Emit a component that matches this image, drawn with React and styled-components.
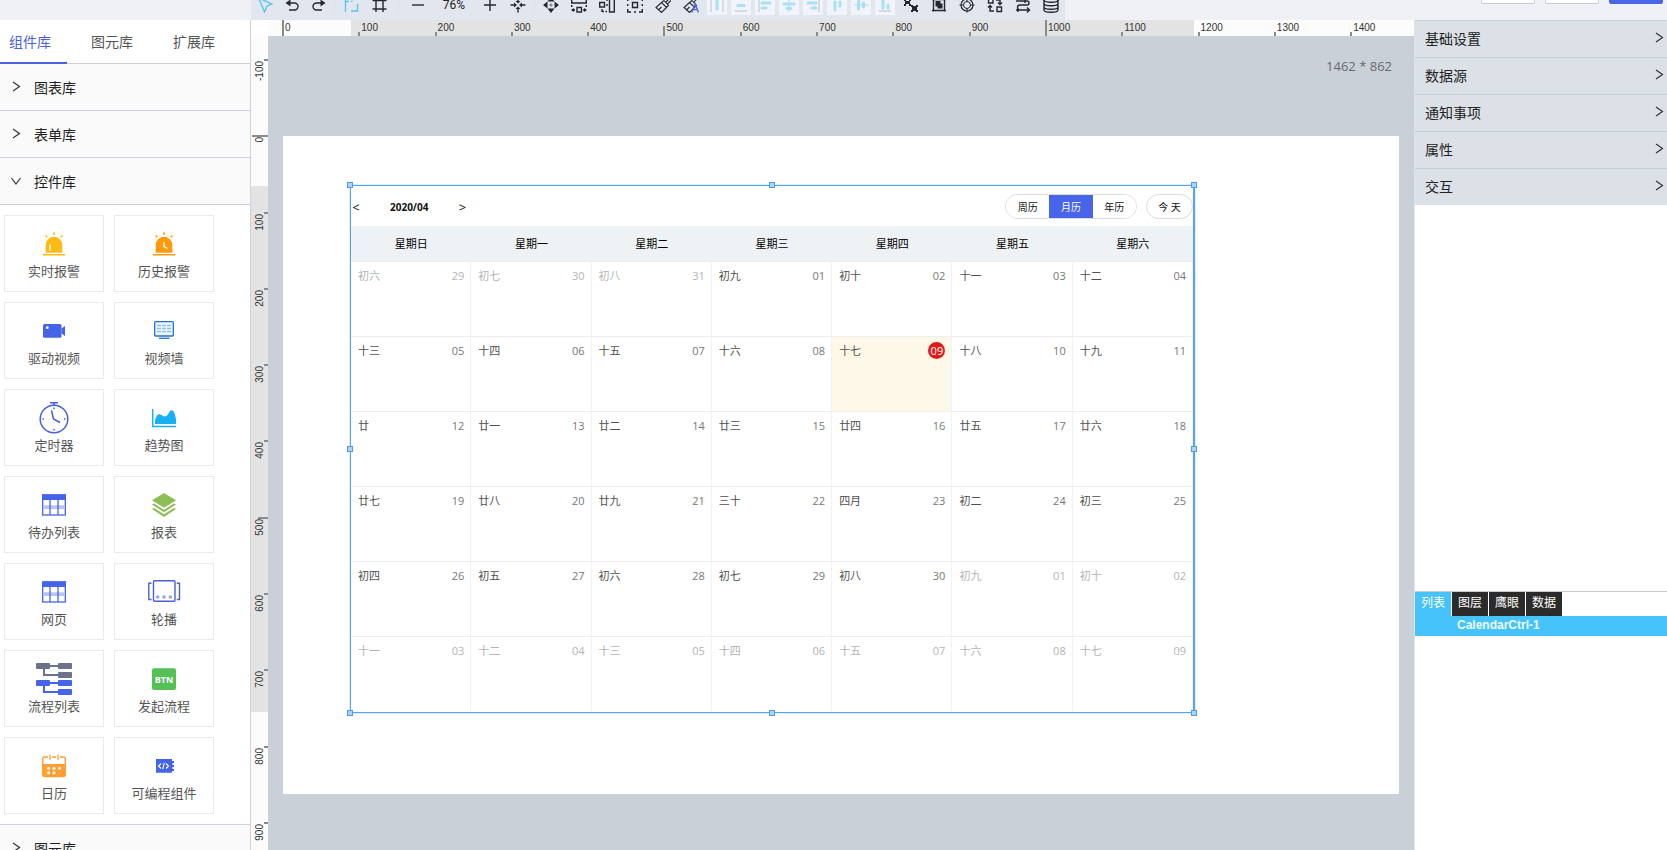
import React from "react";
import styled, { createGlobalStyle, css } from "styled-components";

const GlobalStyle = createGlobalStyle`
  *, *::before, *::after { box-sizing: border-box; }
  html, body, #root { height: 100%; }
  body {
    margin: 0;
    font-family: "Open Sans", "Noto Sans CJK SC", sans-serif;
    font-size: 14px;
    color: #222;
    background: #fff;
  }
  button {
    font: inherit;
    color: inherit;
    padding: 0;
    border: 0;
    background: none;
    cursor: pointer;
  }
  svg { display: block; flex: none; }
`;

/* ---------- shell ---------- */

const Shell = styled.div`
  --unit: calc(100px * 0.763);
  height: 100vh;
  display: flex;
  flex-direction: column;
  overflow: hidden;
`;

const TopBar = styled.header`
  flex: 0 0 20px;
  display: flex;
  align-items: flex-end;
  justify-content: space-between;
  padding-left: 251px;
  background: #eff1f6;
  overflow: hidden;
`;

const Workspace = styled.div`
  flex: 1;
  min-height: 0;
  display: grid;
  grid-template-columns: 251px minmax(0, 1fr) 253px;
`;

/* ---------- toolbar ---------- */

const Toolbar = styled.div`
  display: flex;
  align-items: center;
  height: 30px;
  background: #e2e7ef;
`;

const ToolGroup = styled.div`
  display: flex;
  align-items: center;
  gap: ${(p) => p.$gap || 0}px;
  padding: 0 ${(p) => p.$pad || 0}px;
`;

const Tool = styled.button`
  width: ${(p) => p.$width || 28}px;
  height: 30px;
  display: flex;
  align-items: center;
  justify-content: center;
  color: ${(p) => (p.$active ? "#5cc4ee" : "#23272e")};
`;

const AlignTool = styled.button`
  width: 20px;
  height: 20px;
  display: flex;
  align-items: center;
  justify-content: center;
  background: #f1f4fa;
`;

const Separator = styled.span`
  width: 1px;
  height: 20px;
  margin: 0 ${(p) => p.$space}px;
  background: #dbe1ea;
`;

const ZoomValue = styled.output`
  width: 44px;
  text-align: center;
  font: 12px/20px Roboto, sans-serif;
`;

const Actions = styled.div`
  display: flex;
  gap: 10px;
  padding: 0 4px 16px 0;
`;

const Action = styled.button`
  width: 54px;
  height: 30px;
  border: 1px solid ${(p) => (p.$primary ? "#4a67e8" : "#c9ccd3")};
  border-radius: 2px;
  background: ${(p) => (p.$primary ? "#4a67e8" : "#fff")};
`;

/* ---------- library panel ---------- */

const Library = styled.aside`
  display: flex;
  flex-direction: column;
  min-height: 0;
  border-right: 1px solid #cfd2da;
  background: #fff;
  overflow: hidden;
`;

const LibraryTabs = styled.div`
  flex: none;
  height: 44px;
  display: flex;
  gap: 15px;
  border-bottom: 1px solid #cdd0d9;
`;

const LibraryTab = styled.button`
  height: 44px;
  padding: 2px 16px 0 9px;
  text-align: left;
  line-height: 20px;
  color: ${(p) => (p.$active ? "#4a63d8" : "#555")};
  border-bottom: 2px solid ${(p) => (p.$active ? "#4a63d8" : "transparent")};
`;

const SectionHead = styled.button`
  flex: none;
  display: flex;
  align-items: center;
  gap: 12px;
  width: 100%;
  height: 47px;
  padding: 0 0 1px 10px;
  border-bottom: 1px solid #cdd0d9;
  background: #fafafa;
  color: #222;
`;

const CardGrid = styled.div`
  flex: none;
  display: grid;
  grid-template-columns: repeat(2, 100px);
  gap: 10px;
  padding: 10px 4px;
  border-bottom: 1px solid #cdd0d9;
`;

const Card = styled.button`
  height: 77px;
  display: flex;
  flex-direction: column;
  align-items: center;
  gap: 1px;
  padding-top: 12px;
  border: 1px solid #eaeaea;
  background: #fff;
  font-size: 13px;
  line-height: 20px;
  color: #555;
`;

/* ---------- stage ---------- */

const Stage = styled.main`
  display: grid;
  grid-template-columns: 17px minmax(0, 1fr);
  grid-template-rows: 16px minmax(0, 1fr);
  min-height: 0;
  background: #cad0d7;
`;

const Corner = styled.div`
  background: #fff;
`;

const rulerText = css`
  font-family: "Liberation Sans", sans-serif;
  font-size: 10px;
  line-height: 14px;
  color: #333;
`;

const TopRuler = styled.div`
  ${rulerText}
  display: flex;
  overflow: hidden;
  padding-left: 14px;
  background: linear-gradient(
    to right,
    #fcfcfc 83px,
    #e3e3e3 83px,
    #e3e3e3 calc(100% - 220px),
    #fcfcfc calc(100% - 220px)
  );
`;

const TopMark = styled.span`
  flex: 0 0 var(--unit);
  padding: 1px 0 0 3px;
  display: flex;
  background: linear-gradient(#8a8a8a, #8a8a8a) left bottom / 2px ${(p) => p.$tick}px no-repeat;
`;

const SideRuler = styled.div`
  ${rulerText}
  display: flex;
  flex-direction: column;
  overflow: hidden;
  padding-top: 23px;
  background: linear-gradient(
    to bottom,
    #fcfcfc 150px,
    #e3e3e3 150px,
    #e3e3e3 676px,
    #fcfcfc 676px
  );
`;

const SideMark = styled.span`
  flex: 0 0 var(--unit);
  padding-top: 2px;
  display: flex;
  justify-content: center;
  align-items: flex-start;
  background: linear-gradient(#8a8a8a, #8a8a8a) right top / ${(p) => p.$tick}px 2px no-repeat;
`;

const SideLabel = styled.span`
  writing-mode: vertical-rl;
  transform: rotate(180deg);
`;

const Board = styled.div`
  min-width: 0;
  overflow: hidden;
  padding: 0 15px;
`;

const BoardSize = styled.div`
  height: 100px;
  padding: 20px 7px 0 0;
  text-align: right;
  font-size: 13px;
  line-height: 20px;
  color: #666b70;
`;

const Paper = styled.div`
  padding: 49px 204px 81px 67px;
  background: #fff;
`;

const Selection = styled.div`
  position: relative;
  padding-bottom: 1px;
  border: 1px solid #5aa4ea;
  border-right-width: 2px;
  box-shadow: 0 0 0 1px #dcefff;
`;

const HandleLayer = styled.div`
  position: absolute;
  inset: -1px;
  pointer-events: none;
`;

const Handle = styled.i`
  position: absolute;
  left: ${(p) => p.$x}%;
  top: ${(p) => p.$y}%;
  width: 6px;
  height: 6px;
  margin: -3px 0 0 -3px;
  border: 1px solid #4f9ae6;
  background: #a9d4fb;
`;

/* ---------- calendar ---------- */

const CalendarHead = styled.div`
  height: 40px;
  display: flex;
  align-items: center;
  justify-content: space-between;
  font-size: 10px;
  line-height: 16px;
  color: #111;
`;

const MonthNav = styled.div`
  display: flex;
  align-items: center;
  gap: 30px;
  padding: 1px 0 0 1px;
`;

const NavArrow = styled.button`
  font-size: 13px;
  line-height: 16px;
  width: 8px;
`;

const ModeBar = styled.div`
  display: flex;
  gap: 9px;
  padding-top: 1px;
`;

const ModeGroup = styled.div`
  display: flex;
  height: 25px;
  width: 132px;
  border: 1px solid #dcdcdc;
  border-radius: 13px;
  overflow: hidden;
`;

const Mode = styled.button`
  flex: 1;
  color: ${(p) => (p.$active ? "#fff" : "#111")};
  background: ${(p) => (p.$active ? "#4864e8" : "#fff")};
`;

const Today = styled.button`
  width: 47px;
  height: 25px;
  border: 1px solid #dcdcdc;
  border-radius: 13px;
`;

const CalendarTable = styled.table`
  width: 100%;
  table-layout: fixed;
  border-collapse: separate;
  border-spacing: 0;
  font-size: 11px;
  line-height: 18px;
`;

const Weekday = styled.th`
  height: 35px;
  padding: 0;
  background: #eef2f5;
  color: #000;
  font-weight: 400;
`;

const Day = styled.td`
  height: 75px;
  padding: 5px 6px 0 7px;
  vertical-align: top;
  border-right: 1px solid #f2f2f2;
  border-top: 1px solid #eee;
  background: ${(p) => (p.$today ? "#fdf8e8" : "#fff")};
  color: ${(p) => (p.$muted ? "#b4b4b4" : "#505050")};
`;

const DayLine = styled.div`
  display: flex;
  justify-content: space-between;
`;

const DayNumber = styled.span`
  color: ${(p) => (p.$muted ? "#b4b4b4" : "#777")};
`;

const TodayBadge = styled.span`
  width: 17px;
  height: 17px;
  border-radius: 50%;
  line-height: 17px;
  text-align: center;
  color: #fff;
  background: #e01a1a;
`;

/* ---------- inspector ---------- */

const Inspector = styled.aside`
  display: flex;
  flex-direction: column;
  min-height: 0;
  border-left: 1px solid #dfe4e9;
  background: #fff;
`;

const SettingList = styled.div`
  flex: 1;
  min-height: 0;
  overflow: hidden;
`;

const Setting = styled.button`
  display: flex;
  align-items: center;
  justify-content: space-between;
  width: 100%;
  height: 37px;
  padding: 0 2px 2px 10px;
  border-top: 1px solid #c8cfd6;
  background: #dce1e8;
  color: #222;
`;

const Outline = styled.div`
  flex: 0 0 259px;
  border-top: 1px solid #ccc;
`;

const OutlineTabs = styled.div`
  display: flex;
  gap: 1px;
`;

const OutlineTab = styled.button`
  width: 36px;
  height: 24px;
  padding-bottom: 2px;
  font-size: 12px;
  line-height: 20px;
  color: #fff;
  background: ${(p) => (p.$active ? "#46c3fa" : "#2b2b2b")};
`;

const OutlineItem = styled.button`
  display: block;
  width: 100%;
  height: 20px;
  padding: 0 0 2px 42px;
  text-align: left;
  font: bold 12px/18px "Liberation Sans", sans-serif;
  color: #eefaff;
  background: #46c3fa;
`;

/* ---------- drawings ---------- */

const Chevron = ({ down }) => (
  <svg width="12" height="12" viewBox="0 0 12 12" fill="none" stroke="#333" strokeWidth="1.2">
    <path d={down ? "M1.5 3 6 9 10.5 3" : "M3 1 9.5 5.5 3 10"} />
  </svg>
);

const Glyph = ({ children }) => (
  <svg width="16" height="16" viewBox="0 0 16 16" fill="none" stroke="currentColor" strokeWidth="1.4">
    {children}
  </svg>
);

const glyphs = {
  pointer: <path d="M1.8 1 15 7 10 9 7.5 15Z" />,
  undo: (
    <>
      <path d="M3 6H10.5a3.5 3.5 0 0 1 0 7H5" />
      <path d="M6.5 2.5 1.5 6 6.5 9.5Z" fill="currentColor" stroke="none" />
    </>
  ),
  redo: (
    <>
      <path d="M13 6H5.5a3.5 3.5 0 0 0 0 7H11" />
      <path d="M9.5 2.5 14.5 6 9.500 9.5Z" fill="currentColor" stroke="none" />
    </>
  ),
  snap: <path d="M2.5 2V15M3 4.5H6M8 14H14.5V7M8 4.5H9.5" />,
  grid: <path d="M5 1V15M12 1V15M1.5 3.5H15.5M1.5 12H15.5" />,
  minus: <path d="M2 8H14" />,
  plus: <path d="M2 8H14M8 2V14" />,
  gather: (
    <>
      <path d="M.5 8H5M11 8H15.5M8 .5V5M8 11V15.5" />
      <path d="M4 5.5 7 8 4 10.5ZM12 5.5 9 8 12 10.5ZM5.5 12 8 9.5 10.5 12ZM5.5 4 8 6.5 10.5 4Z" fill="currentColor" stroke="none" />
    </>
  ),
  spread: (
    <>
      <path d="M6.5 8H9.5M8 6.500V9.500" stroke="#7d828b" />
      <path d="M0 8 4.5 4.5V11.5ZM16 8 11.5 4.5V11.5ZM8 16 4.5 11.500H11.5ZM8 0 4.5 4.5H11.5Z" fill="currentColor" stroke="none" />
    </>
  ),
  fitWidth: (
    <>
      <path d="M.7 1V6H15.3V1M6 10.5H10.5V15H6ZM.7 8V10M15.3 8V10M1 13H4M12 13H15" />
      <path d="M0 13 3 11V15ZM16 13 13 11V15Z" fill="currentColor" stroke="none" />
    </>
  ),
  fitHeight: (
    <path d="M10.5 1H15.3V15H10.5ZM.7 5.5H5.5V10H.7ZM8 2V4M8 7V9M3 12V15M3.5 14.5H5M6.500 14.500H8" />
  ),
  fitBoth: (
    <path d="M.7 4V1H4M12 1H15.3V4M15.3 12V15H12M4 15H.7V12M5.5 5.5H10.5V10.5H5.5ZM7 15H9M.7 7V9M15.3 7V9" />
  ),
  brush: (
    <path
      strokeWidth="1.1"
      d="M9 3.500 13.500 8.500 11.500 10.500 6.500 5.500ZM6.500 5.500 1 10.500 6.500 15.500 11.500 10.500M3.500 13 6.500 10M11 5 15.500 .5M12.500 7 16 3.500"
    />
  ),
  brushText: (
    <>
      <path
        strokeWidth="1.1"
        d="M9 3.500 13.500 8.500 11.500 10.500 6.500 5.500ZM6.500 5.500 1 10.500 6.500 15.500 11.500 10.500M3.500 13 6.500 10M11 5 15 .5"
      />
      <path d="M9 15.500 12 6.500 15.500 15.500M10 12.500H14" stroke="#5a6be0" />
    </>
  ),
  ungroup: (
    <path
      d="M1 2H3V4H6V2H8V4H7V7H8V9H6V7H3V9H1V7H2V4H1ZM8 8H10V9H13V8H15V10H14V13H15V15H13V14H10V15H8V13H9V10H8Z"
      fill="currentColor"
      stroke="none"
    />
  ),
  group: (
    <>
      <path d="M2.5 1V14.500M13.5 1V14.500M1 2.5H15M1 13.5H15" />
      <path d="M4.5 4H9.5V6.5H11.5V11.5H6.5V9.5H4.5Z" fill="currentColor" stroke="none" />
    </>
  ),
  target: (
    <>
      <circle cx="8" cy="8" r="6" strokeWidth="1.2" />
      <circle cx="8" cy="8" r="3.500" strokeWidth="1" />
      <path d="M8 1V4.500M8 11.500V15.500M.5 8H4.500M11.500 8H15.500" strokeWidth="1.2" />
    </>
  ),
  swap: (
    <path d="M1.5 1.5H6V6H1.5ZM10 10H14.5V14.5H10ZM9 3H13V7M11 5.5 13 7.5 15 5.5M7 14H3V9M1 10.5 3 8.5 5 10.5" />
  ),
  route: (
    <path d="M1 4H12a2 2 0 0 1 0 4H5a2.5 2.5 0 0 0 0 5H14M12 10.5 14.5 13 12 15.5M1 13H5M3 11V15M10 2V6" />
  ),
  database: (
    <>
      <ellipse cx="8" cy="3" rx="7" ry="2.2" />
      <path d="M1 3V13c0 3 14 3 14 0V3M1 6.5c0 3 14 3 14 0M1 10c0 3 14 3 14 0" />
    </>
  ),
};

const alignGlyphs = [
  { label: "水平分布", guide: "M2 1V15M14 1V15", bars: "M8 3V12" },
  { label: "垂直分布", guide: "M2 14H14M2 1H14", bars: "M5 8.5H11" },
  { label: "左对齐", guide: "M2 1V15", bars: "M5 6H13M5 11H9" },
  { label: "水平居中", guide: "M8 1V15", bars: "M3 7H13M6 11.5H10", tint: true },
  { label: "右对齐", guide: "M14 1V15", bars: "M3 6H11M7 11H11" },
  { label: "顶对齐", guide: "M2 2H14", bars: "M6 5V13M11 5V9" },
  { label: "垂直居中", guide: "M1 8H15", bars: "M5.5 4V12M10.5 6V10", tint: true },
  { label: "底对齐", guide: "M2 14H14", bars: "M6 3V11M11 8V11" },
];

const BLUE = "#4664e8";

const Picture = ({ children }) => (
  <svg width="40" height="32" viewBox="0 0 40 32" fill="none">
    {children}
  </svg>
);

const Siren = ({ color, children }) => (
  <Picture>
    <path d="M11.7 24.7V17a8.3 8.3 0 0 1 16.6 0V24.7Z" fill={color} />
    <path d="M9 26.8H31M20 4.2V7M11.5 7.5 13.3 9.3M28.5 7.5 26.7 9.3" stroke={color} strokeWidth="1.5" />
    {children}
  </Picture>
);

const TablePicture = () => (
  <Picture>
    <rect x="8.7" y="6" width="22.6" height="20" fill="#fff" stroke={BLUE} strokeWidth="1.3" />
    <rect x="8" y="5.3" width="24" height="5.7" fill={BLUE} />
    <rect x="9.3" y="16.3" width="21.4" height="3.7" fill="#b9c4f5" />
    <path d="M16 11V26M24 11V26" stroke={BLUE} strokeWidth="1.3" />
  </Picture>
);

const components = [
  {
    label: "实时报警",
    picture: (
      <Siren color="#fdbb15">
        <path d="M16 16.5V23" stroke="#fff" strokeWidth="1.3" />
      </Siren>
    ),
  },
  {
    label: "历史报警",
    picture: (
      <Siren color="#ff9a0c">
        <path d="M20 14.3V18.5L23.5 20.5" stroke="#fff" strokeWidth="1.3" />
      </Siren>
    ),
  },
  {
    label: "驱动视频",
    picture: (
      <Picture>
        <rect x="9" y="9" width="18.5" height="13.7" rx="1.5" fill={BLUE} />
        <path d="M27.5 13.5 31 11V21L27.5 18.5Z" fill={BLUE} />
        <circle cx="13.3" cy="12.7" r="1.4" fill="#fff" />
      </Picture>
    ),
  },
  {
    label: "视频墙",
    picture: (
      <Picture>
        <rect x="10.7" y="6.7" width="18.6" height="14.3" rx="1" fill="#eef7ff" stroke="#2272c8" strokeWidth="1.3" />
        <path
          d="M13 10.5H17M18 10.5H22M23 10.5H27M13 13.5H17M18 13.5H22M23 13.5H27M13 16.5H17M18 16.5H22M23 16.5H27"
          stroke="#8fbdec"
          strokeWidth="1.7"
        />
        <path d="M15 23.3H25.5" stroke="#2272c8" strokeWidth="1.3" />
      </Picture>
    ),
  },
  {
    label: "定时器",
    picture: (
      <Picture>
        <circle cx="20" cy="17" r="13.8" stroke="#4b60d8" strokeWidth="1.5" />
        <path
          d="M16 .8H24M20 .8V3M17.5 8.5 19.5 17 26 20.5M20 5.5V7M20 27V28.5M8.5 17H10M30 17H31.5"
          stroke="#4b60d8"
          strokeWidth="1.5"
        />
      </Picture>
    ),
  },
  {
    label: "趋势图",
    picture: (
      <Picture>
        <path d="M8.7 7V24.5H32" stroke="#17b0f0" strokeWidth="1.4" />
        <path d="M11 22V18C12.500 14 13.500 12 15.500 12.300C18 13 20 15.500 22.500 14C25 12 25.500 8.300 27.700 8.300C30.500 8.500 31 13 32 17V22Z" fill="#17b0f0" />
      </Picture>
    ),
  },
  { label: "待办列表", picture: <TablePicture /> },
  {
    label: "报表",
    picture: (
      <Picture>
        <path d="M20 4 32 11.3 20 18.7 8 11.3Z" fill="#8cbf57" />
        <path d="M8 15.5 10 14.5 20 20.7 30 14.5 32 15.5 20 23.3ZM8 20 10 19 20 25.3 30 19 32 20 20 28Z" fill="#8cbf57" />
      </Picture>
    ),
  },
  { label: "网页", picture: <TablePicture /> },
  {
    label: "轮播",
    picture: (
      <Picture>
        <rect x="9.5" y="4.8" width="21.5" height="20.5" rx="1" stroke="#4b60d8" strokeWidth="1.4" />
        <path d="M7.5 7.3H4.8V23.5H7.5M32.8 7.3H35.5V23.5H32.8" stroke="#4b60d8" strokeWidth="1.4" />
        <g fill="#96a6ec">
          <circle cx="13.7" cy="21" r="1.8" />
          <circle cx="20" cy="21" r="1.8" />
          <circle cx="26.3" cy="21" r="1.8" />
        </g>
      </Picture>
    ),
  },
  {
    label: "流程列表",
    picture: (
      <Picture>
        <g fill="#6b7289">
          <rect x="2" y="0" width="14" height="6" rx="1" />
          <rect x="24" y="0" width="14" height="6" rx="1" />
          <rect x="24" y="9" width="14" height="6" rx="1" />
        </g>
        <path d="M16 3H24M10 6V12H24" stroke="#6b7289" strokeWidth="2" />
        <g fill={BLUE}>
          <rect x="2" y="17" width="14" height="6" rx="1" />
          <rect x="24" y="17" width="14" height="6" rx="1" />
          <rect x="24" y="26" width="14" height="6" rx="1" />
        </g>
        <path d="M16 20H24M10 23V29H24" stroke={BLUE} strokeWidth="2" />
      </Picture>
    ),
  },
  {
    label: "发起流程",
    picture: (
      <Picture>
        <rect x="8" y="5.3" width="24" height="21.7" rx="2" fill="#55c055" />
        <text x="20" y="19.5" fill="#fff" fontSize="9" fontWeight="700" textAnchor="middle">
          BTN
        </text>
      </Picture>
    ),
  },
  {
    label: "日历",
    picture: (
      <Picture>
        <rect x="8.7" y="7" width="22.6" height="19.5" rx="2" fill="#fff" stroke="#ffa033" strokeWidth="1.4" />
        <path d="M8 14H32V24.5a2 2 0 0 1-2 2H10a2 2 0 0 1-2-2Z" fill="#ffa033" />
        <path d="M14 7H18M22 7H26" stroke="#fff" strokeWidth="1.8" />
        <path d="M16 5V9.7M24 5V9.7" stroke="#ffa033" strokeWidth="1.4" />
        <g fill="#fff">
          <circle cx="14.500" cy="18.3" r="1.5" />
          <circle cx="20" cy="18.3" r="1.5" />
          <circle cx="25.500" cy="18.3" r="1.5" />
          <circle cx="14.500" cy="22.7" r="1.5" />
          <circle cx="20" cy="22.7" r="1.5" />
        </g>
      </Picture>
    ),
  },
  {
    label: "可编程组件",
    picture: (
      <Picture>
        <path d="M12 9H28V11H30V13H28.5V15H30V17H28.5V19H30V21H28V22.7H12Z" fill={BLUE} />
        <path d="M17 13.5 14.5 16 17 18.5M22 13.5 24.5 16 22 18.5M20.3 12.8 18.7 19.2" stroke="#fff" strokeWidth="1.1" />
      </Picture>
    ),
  },
];

/* ---------- data ---------- */

const tools = {
  edit: [
    ["pointer", "选择"],
    ["undo", "撤销"],
    ["redo", "重做"],
  ],
  guides: [
    ["snap", "吸附"],
    ["grid", "网格"],
  ],
  size: [
    ["spread", "铺满"],
    ["fitWidth", "等宽"],
    ["fitHeight", "等高"],
    ["fitBoth", "等宽高"],
    ["brush", "格式刷"],
    ["brushText", "文字格式刷"],
  ],
  arrange: [
    ["ungroup", "取消组合"],
    ["group", "组合"],
    ["target", "定位"],
    ["swap", "替换"],
    ["route", "连线"],
    ["database", "数据"],
  ],
};

const tickLength = (value) => {
  if (value % 1000 === 0) return 16;
  return value % 500 === 0 ? 10 : 4;
};

const topMarks = Array.from({ length: 15 }, (_, i) => i * 100);
const sideMarks = Array.from({ length: 11 }, (_, i) => (i - 1) * 100);

const weekdays = ["星期日", "星期一", "星期二", "星期三", "星期四", "星期五", "星期六"];

const lunarWeeks = [
  "初六 初七 初八 初九 初十 十一 十二",
  "十三 十四 十五 十六 十七 十八 十九",
  "廿 廿一 廿二 廿三 廿四 廿五 廿六",
  "廿七 廿八 廿九 三十 四月 初二 初三",
  "初四 初五 初六 初七 初八 初九 初十",
  "十一 十二 十三 十四 十五 十六 十七",
].map((week) => week.split(" "));

const dayAt = (week, column) => {
  const date = new Date(Date.UTC(2020, 2, 29 + week * 7 + column));
  return {
    number: String(date.getUTCDate()).padStart(2, "0"),
    muted: date.getUTCMonth() !== 3,
    today: date.getUTCMonth() === 3 && date.getUTCDate() === 9,
  };
};

const handles = [
  [0, 0], [50, 0], [100, 0],
  [0, 50], [100, 50],
  [0, 100], [50, 100], [100, 100],
];

/* ---------- parts ---------- */

const ToolSet = ({ items, width, active }) => (
  <ToolGroup>
    {items.map(([name, label]) => (
      <Tool key={name} $width={width} $active={name === active} aria-label={label}>
        <Glyph>{glyphs[name]}</Glyph>
      </Tool>
    ))}
  </ToolGroup>
);

const Calendar = () => (
  <>
    <CalendarHead>
      <MonthNav>
        <NavArrow aria-label="上个月">&lt;</NavArrow>
        <strong>2020/04</strong>
        <NavArrow aria-label="下个月">&gt;</NavArrow>
      </MonthNav>
      <ModeBar>
        <ModeGroup>
          <Mode>周历</Mode>
          <Mode $active>月历</Mode>
          <Mode>年历</Mode>
        </ModeGroup>
        <Today>今 天</Today>
      </ModeBar>
    </CalendarHead>
    <CalendarTable>
      <thead>
        <tr>
          {weekdays.map((name) => (
            <Weekday key={name} scope="col">{name}</Weekday>
          ))}
        </tr>
      </thead>
      <tbody>
        {lunarWeeks.map((week, row) => (
          <tr key={row}>
            {week.map((lunar, column) => {
              const day = dayAt(row, column);
              return (
                <Day key={column} $muted={day.muted} $today={day.today}>
                  <DayLine>
                    <span>{lunar}</span>
                    {day.today ? (
                      <TodayBadge>{day.number}</TodayBadge>
                    ) : (
                      <DayNumber $muted={day.muted}>{day.number}</DayNumber>
                    )}
                  </DayLine>
                </Day>
              );
            })}
          </tr>
        ))}
      </tbody>
    </CalendarTable>
  </>
);

export default function App() {
  return (
    <Shell>
      <GlobalStyle />
      <TopBar>
        <Toolbar role="toolbar">
          <ToolSet items={tools.edit} width={27} active="pointer" />
          <Separator $space={2} />
          <ToolSet items={tools.guides} active="snap" />
          <Separator $space={5} />
          <ToolGroup>
            <Tool aria-label="缩小"><Glyph>{glyphs.minus}</Glyph></Tool>
            <ZoomValue>76%</ZoomValue>
            <Tool aria-label="放大"><Glyph>{glyphs.plus}</Glyph></Tool>
            <Tool aria-label="居中"><Glyph>{glyphs.gather}</Glyph></Tool>
          </ToolGroup>
          <Separator $space={2} />
          <ToolSet items={tools.size} />
          <ToolGroup $gap={4} $pad={2}>
            {alignGlyphs.map((item) => (
              <AlignTool key={item.label} aria-label={item.label}>
                <Glyph>
                  <path d={item.guide} stroke={item.tint ? "#b5e2f5" : "#cfcfd2"} />
                  <path d={item.bars} stroke="#a8e0f6" strokeWidth="3" strokeLinecap="round" />
                </Glyph>
              </AlignTool>
            ))}
          </ToolGroup>
          <ToolSet items={tools.arrange} />
        </Toolbar>
        <Actions>
          <Action aria-label="预览" />
          <Action aria-label="保存" />
          <Action $primary aria-label="发布" />
        </Actions>
      </TopBar>

      <Workspace>
        <Library>
          <LibraryTabs>
            <LibraryTab $active>组件库</LibraryTab>
            <LibraryTab>图元库</LibraryTab>
            <LibraryTab>扩展库</LibraryTab>
          </LibraryTabs>
          <SectionHead><Chevron />图表库</SectionHead>
          <SectionHead><Chevron />表单库</SectionHead>
          <SectionHead><Chevron down />控件库</SectionHead>
          <CardGrid>
            {components.map((item) => (
              <Card key={item.label}>
                {item.picture}
                {item.label}
              </Card>
            ))}
          </CardGrid>
          <SectionHead><Chevron />图元库</SectionHead>
        </Library>

        <Stage>
          <Corner />
          <TopRuler>
            {topMarks.map((value) => (
              <TopMark key={value} $tick={tickLength(value)}>{value}</TopMark>
            ))}
          </TopRuler>
          <SideRuler>
            {sideMarks.map((value) => (
              <SideMark key={value} $tick={tickLength(value)}>
                <SideLabel>{value}</SideLabel>
              </SideMark>
            ))}
          </SideRuler>
          <Board>
            <BoardSize>1462 * 862</BoardSize>
            <Paper>
              <Selection>
                <Calendar />
                <HandleLayer>
                  {handles.map(([x, y]) => (
                    <Handle key={`${x}-${y}`} $x={x} $y={y} />
                  ))}
                </HandleLayer>
              </Selection>
            </Paper>
          </Board>
        </Stage>

        <Inspector>
          <SettingList>
            {["基础设置", "数据源", "通知事项", "属性", "交互"].map((name) => (
              <Setting key={name}>
                {name}
                <Chevron />
              </Setting>
            ))}
          </SettingList>
          <Outline>
            <OutlineTabs>
              <OutlineTab $active>列表</OutlineTab>
              <OutlineTab>图层</OutlineTab>
              <OutlineTab>鹰眼</OutlineTab>
              <OutlineTab>数据</OutlineTab>
            </OutlineTabs>
            <OutlineItem>CalendarCtrl-1</OutlineItem>
          </Outline>
        </Inspector>
      </Workspace>
    </Shell>
  );
}
